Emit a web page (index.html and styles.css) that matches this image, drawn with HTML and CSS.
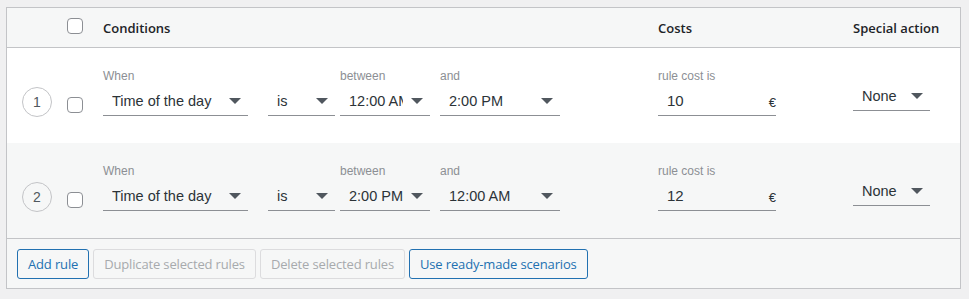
FILE: index.html
```html
<!DOCTYPE html>
<html lang="en">
<head>
    <meta charset="UTF-8">
    <title>Shipping rules</title>
    <link rel="stylesheet" href="styles.css">
</head>
<body>
  <!-- Rules table -->
  <div class="rules-table">
    <div class="rules-head">
      <div class="col-num"></div>
      <div class="col-check"><span class="checkbox"></span></div>
      <div class="col-conditions">Conditions</div>
      <div class="col-costs">Costs</div>
      <div class="col-special">Special action</div>
    </div>

    <div class="rule-row">
      <div class="col-num"><span class="rule-num">1</span></div>
      <div class="col-check"><span class="checkbox"></span></div>
      <div class="col-conditions">
        <div class="field field-when">
          <span class="field-label">When</span>
          <div class="select"><span class="select-text">Time of the day</span><span class="arrow"></span></div>
        </div>
        <div class="field field-is">
          <span class="field-label"></span>
          <div class="select"><span class="select-text">is</span><span class="arrow"></span></div>
        </div>
        <div class="field field-between">
          <span class="field-label">between</span>
          <div class="select"><span class="select-text">12:00 AM</span><span class="arrow"></span></div>
        </div>
        <div class="field field-and">
          <span class="field-label">and</span>
          <div class="select"><span class="select-text">2:00 PM</span><span class="arrow"></span></div>
        </div>
      </div>
      <div class="col-costs">
        <div class="field field-cost">
          <span class="field-label">rule cost is</span>
          <div class="cost-input"><span class="cost-value">10</span><span class="currency">€</span></div>
        </div>
      </div>
      <div class="col-special">
        <div class="select select-special"><span class="select-text">None</span><span class="arrow"></span></div>
      </div>
    </div>

    <div class="rule-row alt">
      <div class="col-num"><span class="rule-num">2</span></div>
      <div class="col-check"><span class="checkbox"></span></div>
      <div class="col-conditions">
        <div class="field field-when">
          <span class="field-label">When</span>
          <div class="select"><span class="select-text">Time of the day</span><span class="arrow"></span></div>
        </div>
        <div class="field field-is">
          <span class="field-label"></span>
          <div class="select"><span class="select-text">is</span><span class="arrow"></span></div>
        </div>
        <div class="field field-between">
          <span class="field-label">between</span>
          <div class="select"><span class="select-text">2:00 PM</span><span class="arrow"></span></div>
        </div>
        <div class="field field-and">
          <span class="field-label">and</span>
          <div class="select"><span class="select-text">12:00 AM</span><span class="arrow"></span></div>
        </div>
      </div>
      <div class="col-costs">
        <div class="field field-cost">
          <span class="field-label">rule cost is</span>
          <div class="cost-input"><span class="cost-value">12</span><span class="currency">€</span></div>
        </div>
      </div>
      <div class="col-special">
        <div class="select select-special"><span class="select-text">None</span><span class="arrow"></span></div>
      </div>
    </div>

    <div class="rules-foot">
      <button class="btn">Add rule</button>
      <button class="btn" disabled>Duplicate selected rules</button>
      <button class="btn" disabled>Delete selected rules</button>
      <button class="btn">Use ready-made scenarios</button>
    </div>
  </div>
</body>
</html>
```

FILE: styles.css
```css
* {
  box-sizing: border-box;
  margin: 0;
  padding: 0;
}

body {
  background-color: #f0f0f1;
  padding: 7px 8px 0 6px;
  font-family: "Liberation Sans", Arial, sans-serif;
  color: #1d2327;
}

.rules-table {
  border: 1px solid #c3c4c7;
  background-color: #fff;
}

/* Columns */

.col-num {
  width: 60px;
  flex-shrink: 0;
}

.col-check {
  width: 36px;
  flex-shrink: 0;
}

.col-conditions {
  flex: 1;
  display: flex;
}

.col-costs {
  width: 195px;
  flex-shrink: 0;
}

.col-special {
  width: 107px;
  flex-shrink: 0;
}

/* Header */

.rules-head {
  display: flex;
  align-items: center;
  height: 40px;
  background-color: #f6f7f7;
  border-bottom: 1px solid #c3c4c7;
  font-family: "Open Sans", sans-serif;
  font-size: 13px;
  font-weight: 600;
}

.rules-head .checkbox {
  margin-top: -3px;
}

.checkbox {
  display: block;
  width: 16px;
  height: 16px;
  border: 1px solid #8c8f94;
  border-radius: 4px;
  background-color: #fff;
}

/* Rows */

.rule-row {
  display: flex;
  align-items: flex-start;
  height: 95px;
  padding-top: 20px;
}

.rule-row.alt {
  background-color: #f6f7f7;
}

.rule-num {
  display: flex;
  align-items: center;
  justify-content: center;
  width: 30px;
  height: 30px;
  margin: 19px 0 0 15px;
  border: 1px solid #c3c4c7;
  border-radius: 50%;
  font-size: 14px;
  color: #50575e;
}

.rule-row .checkbox {
  margin-top: 29px;
}

.field {
  display: flex;
  flex-direction: column;
}

.field-label {
  display: block;
  height: 18px;
  line-height: 16px;
  font-size: 12px;
  color: #8c8f94;
}

.field-when { width: 145px; margin-right: 20px; }
.field-is { width: 67px; margin-right: 5px; }
.field-between { width: 90px; margin-right: 10px; }
.field-and { width: 120px; }
.field-cost { width: 118px; }

/* Select look-alike */

.select {
  display: flex;
  align-items: center;
  height: 30px;
  padding: 0 7px 0 9px;
  border-bottom: 1px solid #8c8f94;
  font-size: 14.5px;
  color: #2c3338;
}

.select-text {
  flex: 1;
  min-width: 0;
  overflow: hidden;
  white-space: nowrap;
}

.arrow {
  flex-shrink: 0;
  width: 0;
  height: 0;
  margin-left: 8px;
  border-left: 6px solid transparent;
  border-right: 6px solid transparent;
  border-top: 6px solid #50575e;
}

.select-special {
  width: 77px;
  margin-top: 13px;
}

.cost-input {
  display: flex;
  align-items: center;
  height: 30px;
  padding-left: 9px;
  border-bottom: 1px solid #8c8f94;
  font-size: 15px;
  color: #2c3338;
}

.cost-value {
  flex: 1;
}

.currency {
  font-size: 13px;
  padding-top: 3px;
}

/* Footer buttons */

.rules-foot {
  display: flex;
  gap: 4px;
  padding: 10px 10px 9px;
  background-color: #f6f7f7;
  border-top: 1px solid #c3c4c7;
}

.btn {
  height: 30px;
  padding: 0 10px;
  font-family: "Open Sans", sans-serif;
  font-size: 13px;
  letter-spacing: -0.15px;
  color: #2271b1;
  background-color: #f6f7f7;
  border: 1px solid #2271b1;
  border-radius: 3px;
  cursor: pointer;
}

.btn:disabled {
  color: #a7aaad;
  border-color: #dcdcde;
  cursor: default;
}
```
